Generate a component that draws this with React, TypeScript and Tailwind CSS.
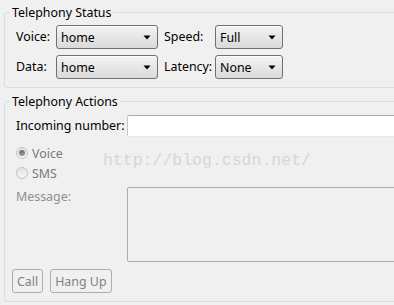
import React from "react";

const combo =
  "flex items-center justify-between h-[24px] rounded-[3px] border border-[#707070] bg-gradient-to-b from-[#f3f3f3] to-[#dadada] pl-[4px] pr-[6px] shadow-[inset_0_1px_0_#ffffff]";

function Combo({ value, width }: { value: string; width: string }) {
  return (
    <div className={`${combo} ${width}`}>
      <span className="leading-[17px]">{value}</span>
      <svg width="8" height="5" viewBox="0 0 8 5">
        <path d="M0.5 0.5 L7.5 0.5 L4 4.5 Z" fill="#000" />
      </svg>
    </div>
  );
}

function Radio({ checked, label }: { checked?: boolean; label: string }) {
  return (
    <div className="flex items-center h-[20px] gap-[4px]">
      <span className="flex items-center justify-center w-[12px] h-[12px] rounded-full border border-[#c2c2c2] bg-gradient-to-b from-[#e4e4e4] to-[#f6f6f6]">
        {checked && <span className="w-[6px] h-[6px] rounded-full bg-gradient-to-b from-[#6a6a6a] to-[#9c9c9c]" />}
      </span>
      <span className="text-[#7a7a7a] leading-[17px]">{label}</span>
    </div>
  );
}

export default function App() {
  return (
    <div className="relative w-[394px] h-[305px] overflow-hidden bg-[#f0f0f0] text-[12.4px] text-black whitespace-nowrap font-['Noto_Sans',sans-serif]">
      <fieldset className="ml-[4px] mt-[4px] w-[430px] border border-[#d5dfe5] rounded-[3px] px-[5px] pt-[4px] pb-[8px]">
        <legend className="px-[2px] leading-[17px]">Telephony Status</legend>
        <div className="grid grid-cols-[34px_102px_45px_68px] gap-x-[6px] gap-y-[6px] items-center pl-[6px]">
          <span>Voice:</span>
          <Combo value="home" width="w-[102px]" />
          <span>Speed:</span>
          <Combo value="Full" width="w-[68px]" />
          <span>Data:</span>
          <Combo value="home" width="w-[102px]" />
          <span>Latency:</span>
          <Combo value="None" width="w-[68px]" />
        </div>
      </fieldset>

      <fieldset className="ml-[4px] mt-[5px] w-[430px] border border-[#d5dfe5] rounded-[3px] px-[5px] pt-[5px] pb-[8px]">
        <legend className="px-[2px] leading-[17px]">Telephony Actions</legend>
        <div className="pl-[6px] flex flex-col">
          <div className="grid grid-cols-[111px_1fr] items-center">
            <span>Incoming number:</span>
            <div className="h-[22px] bg-white border border-[#e3e9ef] border-t-[#abadb3] border-l-[#c5c9d0] rounded-[2px]" />
          </div>
          <div className="mt-[6px] flex flex-col">
            <Radio checked label="Voice" />
            <Radio label="SMS" />
          </div>
          <div className="mt-[4px] grid grid-cols-[111px_1fr] items-start">
            <span className="pt-[1px] text-[#8f8f8f] leading-[17px]">Message:</span>
            <div className="h-[75px] border border-[#acacac] rounded-[2px] bg-[#f0f0f0]" />
          </div>
          <div className="mt-[7px] -ml-[4px] flex gap-[7px]">
            <button className="h-[24px] px-[4px] rounded-[3px] border border-[#adadad] text-[#838383] leading-[17px]">Call</button>
            <button className="h-[24px] px-[4px] rounded-[3px] border border-[#adadad] text-[#838383] leading-[17px]">Hang Up</button>
          </div>
        </div>
      </fieldset>

      <div className="absolute left-[103px] top-[150px] text-[16.5px] leading-[22px] text-[#d6d6d6] font-['Liberation_Mono',monospace]">
        http://blog.csdn.net/
      </div>
    </div>
  );
}
